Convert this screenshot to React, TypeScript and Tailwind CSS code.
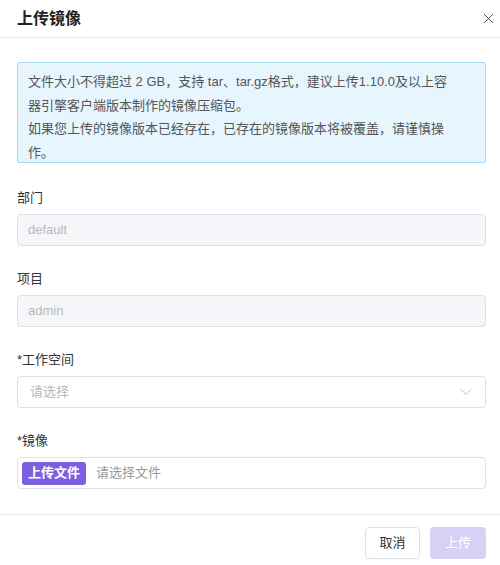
import { ChevronDown, X } from 'lucide-react';

const font = { fontFamily: '"Liberation Sans", "Noto Sans CJK SC", sans-serif' };

function Field({ label, children }: { label: string; children: React.ReactNode }) {
    return (
        <div className="flex flex-col">
            <label className="text-[13px] leading-[20px] text-[#333]">{label}</label>
            <div className="mt-[6px]">{children}</div>
        </div>
    );
}

export default function App() {
    return (
        <div className="w-[500px] h-[565px] bg-white flex flex-col" style={font}>
            <div className="h-[38px] flex items-center justify-between pl-[17px] pr-[3px] border-b border-[#ebebeb]">
                <h1 className="text-[16px] font-semibold text-[#222]">上传镜像</h1>
                <X className="w-[17px] h-[17px] text-[#333]" strokeWidth={1.2} />
            </div>

            <div className="flex-1 pl-[17px] pr-[14px] pt-[24px] flex flex-col">
                <div className="h-[101px] border border-[#a9d8f7] bg-[#e6f5fe] rounded-[2px] pl-[10px] pr-[6px] pt-[7px] text-[13px] leading-[23.5px] text-[#555] whitespace-nowrap">
                    文件大小不得超过 2 GB，支持 tar、tar.gz格式，建议上传1.10.0及以上容
                    <br />
                    器引擎客户端版本制作的镜像压缩包。
                    <br />
                    如果您上传的镜像版本已经存在，已存在的镜像版本将被覆盖，请谨慎操
                    <br />
                    作。
                </div>

                <div className="mt-[25px] flex flex-col gap-[23px]">
                    <Field label="部门">
                        <div className="h-[32px] rounded-[4px] border border-[#dcdfe6] bg-[#f5f6f9] flex items-center px-[10px] text-[13px] text-[#b8b8b8]">
                            default
                        </div>
                    </Field>
                    <Field label="项目">
                        <div className="h-[32px] rounded-[4px] border border-[#dcdfe6] bg-[#f5f6f9] flex items-center px-[10px] text-[13px] text-[#b8b8b8]">
                            admin
                        </div>
                    </Field>
                    <Field label="*工作空间">
                        <div className="h-[32px] rounded-[4px] border border-[#dcdfe6] bg-white flex items-center justify-between pl-[12px] pr-[9px] text-[13px] text-[#b8b8b8]">
                            <span>请选择</span>
                            <ChevronDown className="w-[20px] h-[20px] text-[#b0b0b0]" strokeWidth={1} />
                        </div>
                    </Field>
                    <Field label="*镜像">
                        <div className="h-[32px] rounded-[4px] border border-[#dcdfe6] bg-white flex items-center pl-[4px] text-[13px]">
                            <span className="h-[23px] w-[64px] rounded-[3px] bg-[#7b5fe0] text-white font-semibold flex items-center justify-center">
                                上传文件
                            </span>
                            <span className="ml-[10px] text-[#999]">请选择文件</span>
                        </div>
                    </Field>
                </div>
            </div>

            <div className="h-[51px] border-t border-[#ebebeb] flex items-start justify-end gap-[10px] pr-[14px] pt-[12px]">
                <button className="h-[32px] w-[55px] rounded-[4px] border border-[#dcdfe6] bg-white text-[13px] text-[#333]">
                    取消
                </button>
                <button className="h-[32px] w-[56px] rounded-[4px] bg-[#d8d1f6] text-[13px] text-white">
                    上传
                </button>
            </div>
        </div>
    );
}
